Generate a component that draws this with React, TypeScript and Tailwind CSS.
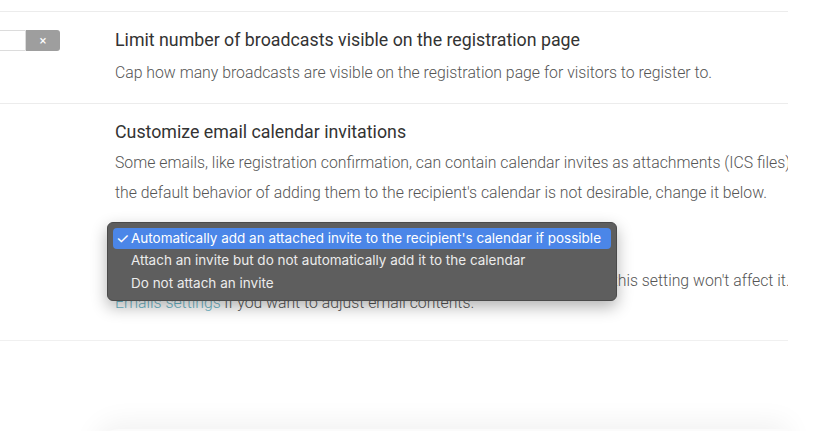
import React from "react";

const options = [
  "Automatically add an attached invite to the recipient's calendar if possible",
  "Attach an invite but do not automatically add it to the calendar",
  "Do not attach an invite",
];

export default function App() {
  return (
    <div className="relative h-[431px] w-[820px] overflow-hidden bg-white font-['Roboto',sans-serif]">
      <div className="w-[788px] overflow-hidden pt-[11px]">
        {/* broadcasts limit */}
        <div className="flex h-[92px] border-t border-[#ececec]">
          <div className="w-[115px] shrink-0 pt-[18px]">
            <div className="flex h-[21px] w-[60px] justify-end overflow-hidden">
              <div className="h-[21px] w-[60px] shrink-0 rounded-l-[3px] border border-[#dcdcdc] bg-white" />
              <div className="flex h-[21px] w-[34px] shrink-0 items-center justify-center rounded-r-[3px] bg-[#9e9e9e] text-[13px] text-white">
                ×
              </div>
            </div>
          </div>
          <div className="pt-[16px]">
            <div className="whitespace-nowrap text-[17.8px] leading-[24px] text-[#333]">
              Limit number of broadcasts visible on the registration page
            </div>
            <div className="mt-[10px] whitespace-nowrap text-[15.8px] font-light leading-[22px] text-[#555]">
              Cap how many broadcasts are visible on the registration page for visitors to register to.
            </div>
          </div>
        </div>

        {/* calendar invitations */}
        <div className="flex h-[237px] border-t border-[#ececec]">
          <div className="w-[115px] shrink-0" />
          <div className="pt-[16px]">
            <div className="whitespace-nowrap text-[17.8px] leading-[24px] text-[#333]">
              Customize email calendar invitations
            </div>
            <div className="mt-[4px] text-[15.8px] font-light leading-[30px] text-[#555]">
              <div className="whitespace-nowrap">
                Some emails, like registration confirmation, can contain calendar invites as attachments (ICS files). If
              </div>
              <div className="whitespace-nowrap">
                the default behavior of adding them to the recipient's calendar is not desirable, change it below.
              </div>
            </div>
            <div className="mt-[16px] h-[22px] w-[300px] rounded-[3px] border border-[#ddd] bg-white" />
            <div className="mt-[24px] text-[15.8px] font-light leading-[22px] text-[#555]">
              <div className="whitespace-nowrap">
                Note that if an email template doesn't contain any calendar invites at all, this setting won't affect it. Check the
              </div>
              <div className="whitespace-nowrap">
                <span className="text-[#6bb6c8]">Emails settings</span> if you want to adjust email contents.
              </div>
            </div>
          </div>
        </div>
        <div className="border-t border-[#f0f0f0]" />
      </div>

      {/* footer bar peeking from below */}
      <div className="mt-[88px] ml-[95px] h-[40px] w-[693px] rounded-tl-[24px] bg-[#fbfbfb] shadow-[0_-6px_28px_rgba(0,0,0,0.06)]" />

      {/* native select popup */}
      <div className="absolute left-[107px] top-[222px] w-[510px] rounded-[6px] border border-[#4a4a4a] bg-[#5e5e5e] px-[5px] py-[5px] font-['Inter',sans-serif] text-[13.5px] text-[#ececec] shadow-[0_6px_16px_rgba(0,0,0,0.3)]">
        {options.map((opt, i) => (
          <div
            key={opt}
            className={
              i === 0
                ? "flex h-[21px] items-center rounded-[4px] bg-[#4b86e8] text-white"
                : "flex h-[23px] items-center"
            }
          >
            <span className="w-[18px] shrink-0 pl-[3px] text-[15px] leading-none">{i === 0 ? "✓" : ""}</span>
            <span className="whitespace-nowrap">{opt}</span>
          </div>
        ))}
      </div>
    </div>
  );
}
